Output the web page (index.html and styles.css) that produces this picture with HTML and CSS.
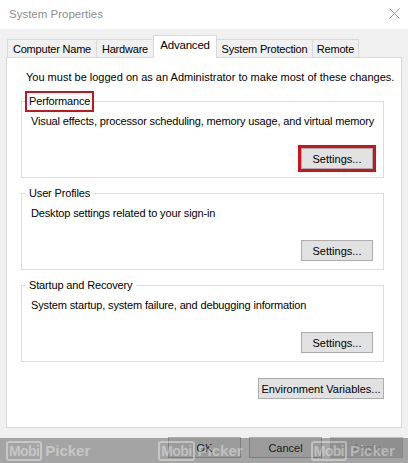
FILE: index.html
```html
<!DOCTYPE html>
<html>
<head>
<meta charset="utf-8">
<title>System Properties</title>
<link rel="stylesheet" href="styles.css">
</head>
<body>
<div class="window">
  <div class="titlebar">
    <span class="title">System Properties</span>
    <svg class="close" width="11" height="11" viewBox="0 0 11 11"><path d="M0.5 0.5 L10.5 10.5 M10.5 0.5 L0.5 10.5" stroke="#9a9a9a" stroke-width="1" fill="none"/></svg>
  </div>
  <div class="body">
    <div class="tabs">
      <div class="tab w-cn">Computer Name</div>
      <div class="tab w-hw">Hardware</div>
      <div class="tab active w-adv">Advanced</div>
      <div class="tab w-sp">System Protection</div>
      <div class="tab w-rm">Remote</div>
    </div>
    <div class="panel">
      <p class="note">You must be logged on as an Administrator to make most of these changes.</p>
      <fieldset class="group">
        <legend class="legend marked">Performance</legend>
        <p class="desc">Visual effects, processor scheduling, memory usage, and virtual memory</p>
        <div class="row"><button class="btn settings marked-btn">Settings...</button></div>
      </fieldset>
      <fieldset class="group">
        <legend class="legend">User Profiles</legend>
        <p class="desc">Desktop settings related to your sign-in</p>
        <div class="row"><button class="btn settings">Settings...</button></div>
      </fieldset>
      <fieldset class="group">
        <legend class="legend">Startup and Recovery</legend>
        <p class="desc">System startup, system failure, and debugging information</p>
        <div class="row"><button class="btn settings">Settings...</button></div>
      </fieldset>
      <div class="row env-row"><button class="btn env">Environment Variables...</button></div>
    </div>
    <div class="footer">
      <button class="btn dlg">OK</button>
      <button class="btn dlg">Cancel</button>
      <button class="btn dlg disabled">Apply</button>
    </div>
  </div>
  <div class="watermark">
    <div class="logo"><span class="mobi">Mobi</span><span class="picker">Picker</span></div>
    <div class="logo"><span class="mobi">Mobi</span><span class="picker">Picker</span></div>
    <div class="logo"><span class="mobi">Mobi</span><span class="picker">Picker</span></div>
  </div>
</div>
</body>
</html>
```
FILE: styles.css
```css
* { box-sizing: border-box; }
html, body { margin: 0; padding: 0; }
body {
  width: 408px;
  height: 463px;
  overflow: hidden;
  background: #f0f0f0;
  font-family: "Liberation Sans", Arial, sans-serif;
  font-size: 11px;
  color: #000;
}
.window {
  position: relative;
  width: 408px;
  height: 463px;
  background: #f0f0f0;
}
.titlebar {
  height: 29px;
  background: #fff;
  display: flex;
  align-items: center;
  justify-content: space-between;
  padding: 0 8px 0 9px;
}
.title {
  font-size: 11.5px;
  color: #8e8e8e;
  margin-top: -1px;
}
.close { margin-top: -2px; }
.body {
  display: flex;
  flex-direction: column;
}
.tabs {
  display: flex;
  align-items: flex-end;
  height: 28px;
  padding-left: 7px;
  position: relative;
  z-index: 1;
}
.tab {
  height: 18px;
  border: 1px solid #d9d9d9;
  border-bottom: none;
  margin-right: -1px;
  background: #f0f0f0;
  display: flex;
  align-items: center;
  justify-content: center;
  line-height: 1;
  padding-top: 1px;
  letter-spacing: -0.2px;
}
.tab.active {
  height: 23px;
  background: #fff;
  margin-bottom: -1px;
  padding-top: 0;
  padding-bottom: 3px;
  position: relative;
  z-index: 2;
  font-size: 11.5px;
}
.w-cn { width: 90px; }
.w-hw { width: 58px; }
.w-adv { width: 64px; }
.w-sp { width: 97px; }
.w-rm { width: 47px; }
.panel {
  margin: 0 6px;
  height: 371px;
  background: #fff;
  border: 1px solid #d9d9d9;
  padding: 0 17px 0 14px;
  display: flex;
  flex-direction: column;
}
.note {
  margin: 12px 0 6px 5px;
  line-height: 15px;
  white-space: nowrap;
}
.group {
  margin: 0 0 5px 0;
  padding: 0 10px 8px 9px;
  border: 1px solid #dcdcdc;
  min-width: 0;
}
.legend {
  padding: 1px 2px;
  margin-left: -6px;
  border: 2px solid transparent;
  line-height: 15px;
  letter-spacing: -0.15px;
}
.legend.marked {
  border-color: #c4161c;
}
.desc {
  margin: 2px 0 0 0;
  line-height: 15px;
  white-space: nowrap;
  letter-spacing: -0.15px;
}
.row {
  display: flex;
  justify-content: flex-end;
}
.group .row { margin-top: 19px; }
.btn {
  font-family: inherit;
  font-size: 11px;
  color: #000;
  background: #e1e1e1;
  border: 1px solid #adadad;
  height: 21px;
  padding: 0;
  margin: 0;
}
.settings { width: 72px; }
.marked-btn {
  outline: 3px solid #c4161c;
  outline-offset: 0;
}
.env-row { margin-top: 11px; }
.env { width: 126px; }
.footer {
  display: flex;
  justify-content: flex-end;
  gap: 8px;
  padding: 9px 5px 0 0;
}
.dlg { width: 73px; }
.disabled { color: #a0a0a0; border-color: #bfbfbf; background: #cccccc; }
.watermark {
  position: absolute;
  left: 0;
  top: 438px;
  width: 408px;
  height: 25px;
  background: rgba(60, 60, 60, 0.42);
  display: flex;
  align-items: center;
  gap: 68px;
  padding-left: 6px;
}
.logo {
  display: flex;
  align-items: center;
  gap: 3px;
  font-weight: bold;
  font-size: 14px;
  color: rgba(255, 255, 255, 0.38);
}
.mobi {
  border: 2px solid rgba(255, 255, 255, 0.38);
  border-radius: 3px;
  padding: 0 1px;
  line-height: 16px;
  letter-spacing: -0.6px;
}
.picker { line-height: 16px; font-size: 15px; }
```
